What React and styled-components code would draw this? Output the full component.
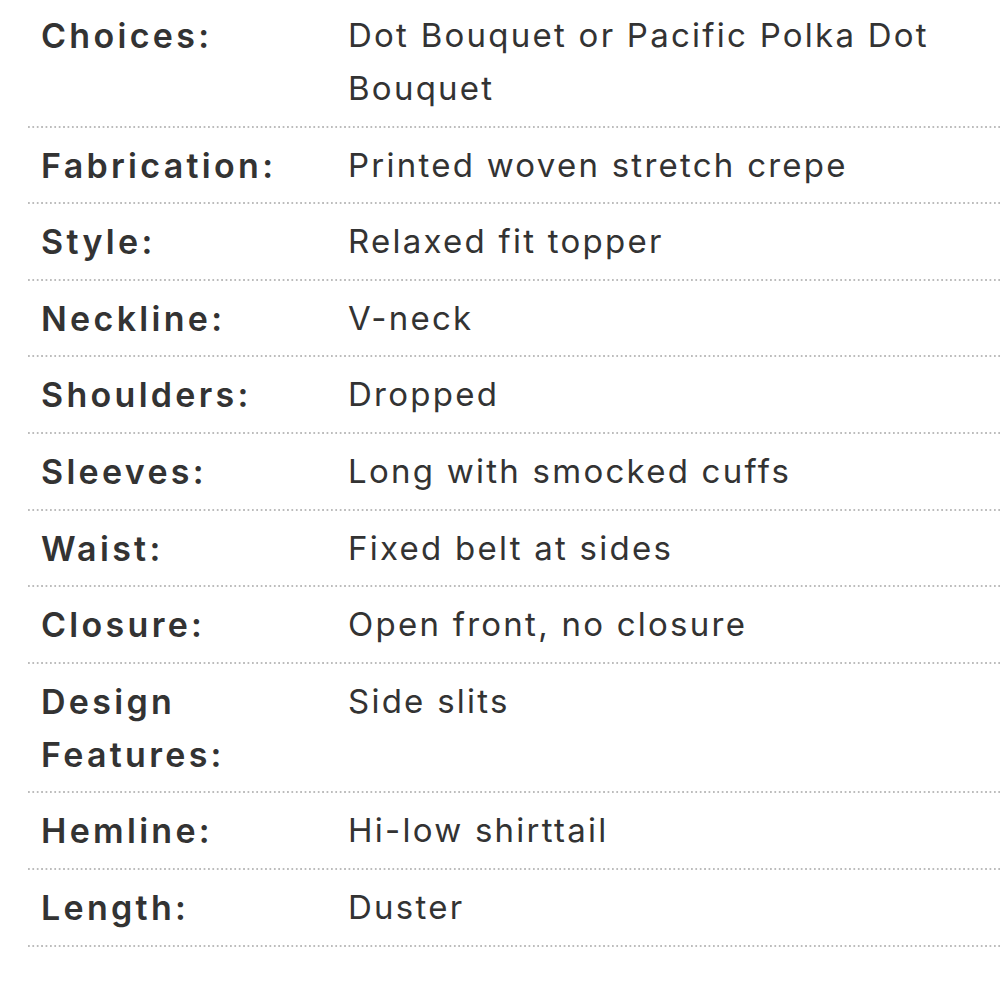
import React from "react";
import styled, { createGlobalStyle } from "styled-components";

const GlobalStyle = createGlobalStyle`
  html, body {
    margin: 0;
    padding: 0;
    background: #ffffff;
  }
  body {
    font-family: "Inter", "Liberation Sans", sans-serif;
    color: #333333;
    overflow: hidden;
  }
`;

const Specs = styled.dl`
  margin: -2px 0 0 28px;
  padding: 0;
`;

const Row = styled.div`
  display: grid;
  grid-template-columns: 307px 1fr;
  padding: 11px 0 12.6px 13px;
  background-image: linear-gradient(to right, #bcbcbc 50%, transparent 50%);
  background-size: 4.4px 2px;
  background-repeat: repeat-x;
  background-position: left bottom;
`;

const Label = styled.dt`
  margin: 0;
  font-size: 34px;
  line-height: 53px;
  font-weight: 600;
  letter-spacing: 3.3px;
  color: #333333;
  padding-right: 20px;
`;

const Value = styled.dd`
  margin: 0;
  font-size: 33px;
  line-height: 53px;
  font-weight: 400;
  letter-spacing: 2.25px;
  color: #333333;
  padding-right: 40px;
`;

const specs = [
  ["Choices:", "Dot Bouquet or Pacific Polka Dot Bouquet"],
  ["Fabrication:", "Printed woven stretch crepe"],
  ["Style:", "Relaxed fit topper"],
  ["Neckline:", "V-neck"],
  ["Shoulders:", "Dropped"],
  ["Sleeves:", "Long with smocked cuffs"],
  ["Waist:", "Fixed belt at sides"],
  ["Closure:", "Open front, no closure"],
  ["Design Features:", "Side slits"],
  ["Hemline:", "Hi-low shirttail"],
  ["Length:", "Duster"],
];

export default function App() {
  return (
    <>
      <GlobalStyle />
      <Specs>
        {specs.map(([label, value]) => (
          <Row key={label}>
            <Label>{label}</Label>
            <Value>{value}</Value>
          </Row>
        ))}
      </Specs>
    </>
  );
}
